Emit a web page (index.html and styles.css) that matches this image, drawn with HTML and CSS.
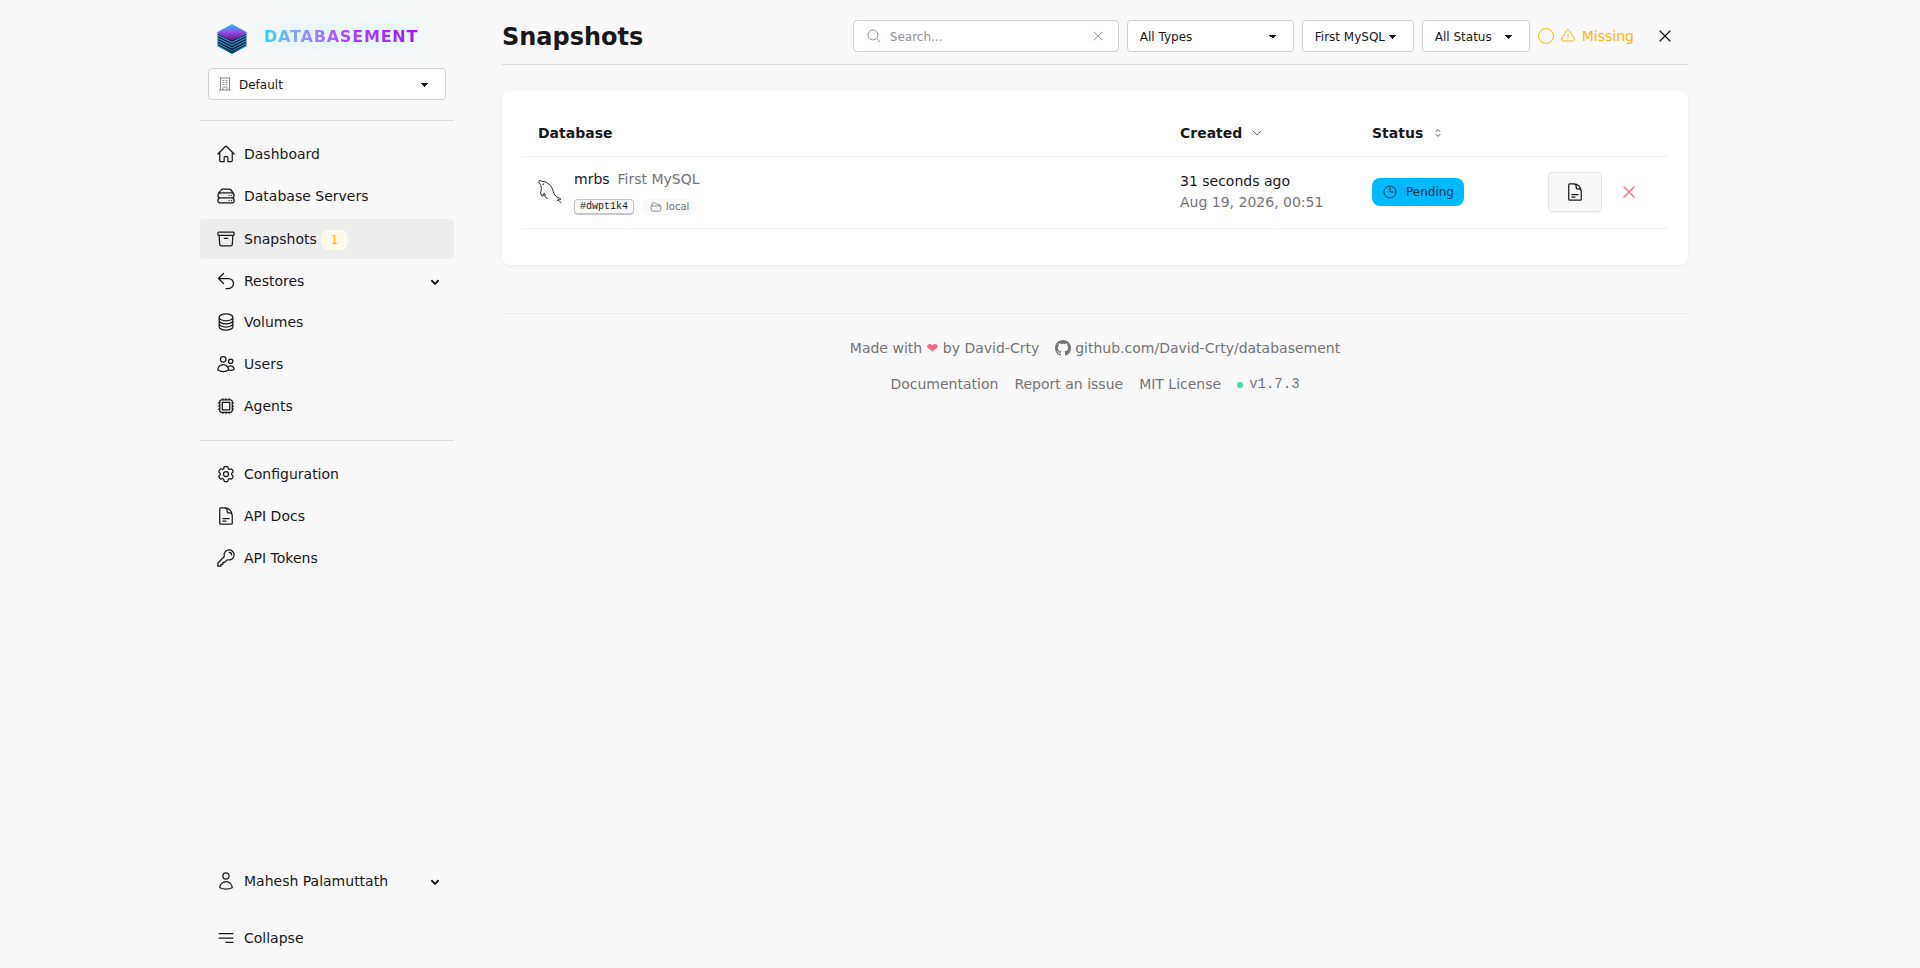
FILE: index.html
```html
<!DOCTYPE html>
<html lang="en">
<head>
<meta charset="utf-8">
<meta name="viewport" content="width=device-width, initial-scale=1">
<title>Snapshots - Databasement</title>
<link rel="stylesheet" href="styles.css">
</head>
<body>
<svg class="sprite" aria-hidden="true">
  <symbol id="i-doc" viewBox="0 0 24 24"><path d="M19.5 14.25v-2.625a3.375 3.375 0 0 0-3.375-3.375h-1.5A1.125 1.125 0 0 1 13.5 7.125v-1.5a3.375 3.375 0 0 0-3.375-3.375H8.25m0 12.75h7.5m-7.5 3H12M10.5 2.25H5.625c-.621 0-1.125.504-1.125 1.125v17.25c0 .621.504 1.125 1.125 1.125h12.75c.621 0 1.125-.504 1.125-1.125V11.25a9 9 0 0 0-9-9Z"/></symbol>
  <symbol id="i-x" viewBox="0 0 24 24"><path d="M6 18 18 6M6 6l12 12"/></symbol>
</svg>
<div class="layout">
  <aside class="sidebar">
    <a class="brand" href="#">
      <svg class="brand-mark" viewBox="0 0 86 88" aria-hidden="true">
        <defs>
          <linearGradient id="top" x1="0" y1="0" x2="0" y2="1"><stop offset="0" stop-color="#22c3f7"/><stop offset=".45" stop-color="#9450ea"/><stop offset=".75" stop-color="#7a2fb8"/><stop offset="1" stop-color="#4a1570"/></linearGradient>
          <linearGradient id="edge" gradientUnits="userSpaceOnUse" x1="0" y1="30" x2="0" y2="88"><stop offset="0" stop-color="#3fb4ff"/><stop offset=".55" stop-color="#25a3c4"/><stop offset="1" stop-color="#125a78"/></linearGradient>
        </defs>
        <path d="M1 28 43 48 85 28V64L43 87 1 64Z" fill="#0d1440"/>
        <g fill="none" stroke="url(#edge)" stroke-width="3">
          <path d="M1 33 43 54 85 33"/><path d="M1 41 43 62 85 41"/><path d="M1 49 43 70 85 49"/><path d="M1 57 43 78 85 57"/><path d="M1 64 43 86 85 64"/>
        </g>
        <path d="M43 1 85 24V28L43 49 1 28V24Z" fill="url(#top)"/>
        <path d="M1 29V24L43 2 85 24V29" fill="none" stroke="#20b4ee" stroke-width="2"/>
      </svg>
      <span class="brand-name">DATABASEMENT</span>
    </a>
    <div class="org">
      <svg class="icon org-icon" viewBox="0 0 24 24" aria-hidden="true"><path d="M3.75 21h16.5M4.5 3h15M5.25 3v18m13.5-18v18M9 6.75h1.5m-1.5 3h1.5m-1.5 3h1.5m3-6H15m-1.5 3H15m-1.5 3H15M9 21v-3.375c0-.621.504-1.125 1.125-1.125h3.75c.621 0 1.125.504 1.125 1.125V21"/></svg>
      <select class="select org-select" aria-label="Organization"><option>Default</option></select>
    </div>
    <nav class="menu" aria-label="Main">
      <a class="item" href="#"><svg class="icon" viewBox="0 0 24 24"><path d="m2.25 12 8.954-8.955c.44-.439 1.152-.439 1.591 0L21.75 12M4.5 9.75v10.125c0 .621.504 1.125 1.125 1.125H9.75v-4.875c0-.621.504-1.125 1.125-1.125h2.25c.621 0 1.125.504 1.125 1.125V21h4.125c.621 0 1.125-.504 1.125-1.125V9.75"/></svg>Dashboard</a>
      <a class="item" href="#"><svg class="icon" viewBox="0 0 24 24"><path d="M5.25 14.25h13.5m-13.5 0a3 3 0 0 1-3-3m3 3a3 3 0 1 0 0 6h13.5a3 3 0 1 0 0-6m-16.5-3a3 3 0 0 1 3-3h13.5a3 3 0 0 1 3 3m-19.5 0a4.5 4.5 0 0 1 .9-2.7L5.737 5.1a3.375 3.375 0 0 1 2.7-1.35h7.126c1.062 0 2.062.5 2.7 1.35l2.587 3.45a4.5 4.5 0 0 1 .9 2.7m0 0a3 3 0 0 1-3 3m0 3h.008v.008h-.008v-.008Zm0-6h.008v.008h-.008v-.008Zm-3 6h.008v.008h-.008v-.008Zm0-6h.008v.008h-.008v-.008Z"/></svg>Database Servers</a>
      <a class="item item-active" href="#" aria-current="page"><svg class="icon" viewBox="0 0 24 24"><path d="m20.25 7.5-.625 10.632a2.25 2.25 0 0 1-2.247 2.118H6.622a2.25 2.25 0 0 1-2.247-2.118L3.75 7.5M10 11.25h4M3.375 7.5h17.25c.621 0 1.125-.504 1.125-1.125v-1.5c0-.621-.504-1.125-1.125-1.125H3.375c-.621 0-1.125.504-1.125 1.125v1.5c0 .621.504 1.125 1.125 1.125Z"/></svg><span class="with-count">Snapshots <span class="count">1</span></span></a>
      <button class="item item-group" type="button" aria-expanded="false"><svg class="icon" viewBox="0 0 24 24"><path d="M9 15 3 9m0 0 6-6M3 9h12a6 6 0 0 1 0 12h-3"/></svg>Restores</button>
      <a class="item" href="#"><svg class="icon" viewBox="0 0 24 24"><path d="M20.25 6.375c0 2.278-3.694 4.125-8.25 4.125S3.75 8.653 3.75 6.375m16.5 0c0-2.278-3.694-4.125-8.25-4.125S3.75 4.097 3.75 6.375m16.5 0v11.25c0 2.278-3.694 4.125-8.25 4.125s-8.25-1.847-8.25-4.125V6.375m16.5 0v3.75m-16.5-3.75v3.75m16.5 0v3.75C20.25 16.153 16.556 18 12 18s-8.25-1.847-8.25-4.125v-3.75m16.5 0c0 2.278-3.694 4.125-8.25 4.125s-8.25-1.847-8.25-4.125"/></svg>Volumes</a>
      <a class="item" href="#"><svg class="icon" viewBox="0 0 24 24"><path d="M15 19.128a9.38 9.38 0 0 0 2.625.372 9.337 9.337 0 0 0 4.121-.952 4.125 4.125 0 0 0-7.533-2.493M15 19.128v-.003c0-1.113-.285-2.16-.786-3.07M15 19.128v.106A12.318 12.318 0 0 1 8.624 21c-2.331 0-4.512-.645-6.374-1.766l-.001-.109a6.375 6.375 0 0 1 11.964-3.07M12 6.375a3.375 3.375 0 1 1-6.75 0 3.375 3.375 0 0 1 6.75 0Zm8.25 2.25a2.625 2.625 0 1 1-5.25 0 2.625 2.625 0 0 1 5.25 0Z"/></svg>Users</a>
      <a class="item" href="#"><svg class="icon" viewBox="0 0 24 24"><path d="M8.25 3v1.5M4.5 8.25H3m18 0h-1.5M4.5 12H3m18 0h-1.5m-15 3.75H3m18 0h-1.5M8.25 19.5V21M12 3v1.5m0 15V21m3.75-18v1.5m0 15V21m-9-1.5h10.5a2.25 2.25 0 0 0 2.25-2.25V6.75a2.25 2.25 0 0 0-2.25-2.25H6.75A2.25 2.25 0 0 0 4.5 6.75v10.5a2.25 2.25 0 0 0 2.25 2.25Zm.75-12h9v9h-9v-9Z"/></svg>Agents</a>
    </nav>
    <nav class="menu" aria-label="Settings">
      <a class="item" href="#"><svg class="icon" viewBox="0 0 24 24"><path d="M9.594 3.94c.09-.542.56-.94 1.11-.94h2.593c.55 0 1.02.398 1.11.94l.213 1.281c.063.374.313.686.645.87.074.04.147.083.22.127.325.196.72.257 1.075.124l1.217-.456a1.125 1.125 0 0 1 1.37.49l1.296 2.247a1.125 1.125 0 0 1-.26 1.431l-1.003.827c-.293.241-.438.613-.43.992a7.723 7.723 0 0 1 0 .255c-.008.378.137.75.43.991l1.004.827c.424.35.534.955.26 1.43l-1.298 2.247a1.125 1.125 0 0 1-1.369.491l-1.217-.456c-.355-.133-.75-.072-1.076.124a6.47 6.47 0 0 1-.22.128c-.331.183-.581.495-.644.869l-.213 1.281c-.09.543-.56.94-1.11.94h-2.594c-.55 0-1.019-.398-1.11-.94l-.213-1.281c-.062-.374-.312-.686-.644-.87a6.52 6.52 0 0 1-.22-.127c-.325-.196-.72-.257-1.076-.124l-1.217.456a1.125 1.125 0 0 1-1.369-.49l-1.297-2.247a1.125 1.125 0 0 1 .26-1.431l1.004-.827c.292-.24.437-.613.43-.991a6.932 6.932 0 0 1 0-.255c.007-.38-.138-.751-.43-.992l-1.004-.827a1.125 1.125 0 0 1-.26-1.43l1.297-2.247a1.125 1.125 0 0 1 1.37-.491l1.216.456c.356.133.751.072 1.076-.124.072-.044.146-.086.22-.128.332-.183.582-.495.644-.869l.214-1.28Z"/><path d="M15 12a3 3 0 1 1-6 0 3 3 0 0 1 6 0Z"/></svg>Configuration</a>
      <a class="item" href="#"><svg class="icon"><use href="#i-doc"/></svg>API Docs</a>
      <a class="item" href="#"><svg class="icon" viewBox="0 0 24 24"><path d="M15.75 5.25a3 3 0 0 1 3 3m3 0a6 6 0 0 1-7.029 5.912c-.563-.097-1.159.026-1.563.43L10.5 17.25H8.25v2.25H6v2.25H2.25v-2.818c0-.597.237-1.17.659-1.591l6.499-6.499c.404-.404.527-1 .43-1.563A6 6 0 1 1 21.75 8.25Z"/></svg>API Tokens</a>
    </nav>
    <div class="account">
      <button class="item item-group" type="button" aria-expanded="false"><svg class="icon" viewBox="0 0 24 24"><path d="M15.75 6a3.75 3.75 0 1 1-7.5 0 3.75 3.75 0 0 1 7.5 0ZM4.501 20.118a7.5 7.5 0 0 1 14.998 0A17.933 17.933 0 0 1 12 21.75c-2.676 0-5.216-.584-7.499-1.632Z"/></svg>Mahesh Palamuttath</button>
      <button class="item" type="button"><svg class="icon" viewBox="0 0 24 24"><path d="M3.75 6.75h16.5M3.75 12h16.5M12 17.25h8.25"/></svg>Collapse</button>
    </div>
  </aside>

  <main class="main">
    <header class="page-head">
      <h1 class="title">Snapshots</h1>
      <div class="filters">
        <label class="search">
          <svg class="icon icon-sm" viewBox="0 0 24 24" aria-hidden="true"><path d="m21 21-5.197-5.197m0 0A7.5 7.5 0 1 0 5.196 5.196a7.5 7.5 0 0 0 10.607 10.607Z"/></svg>
          <input class="search-input" type="text" placeholder="Search..." aria-label="Search">
          <button class="search-clear" type="button" aria-label="Clear search"><svg class="icon icon-sm"><use href="#i-x"/></svg></button>
        </label>
        <select class="select select-type" aria-label="Type"><option>All Types</option></select>
        <select class="select select-server" aria-label="Server"><option>First MySQL</option></select>
        <select class="select select-status" aria-label="Status"><option>All Status</option></select>
        <label class="missing">
          <input class="check" type="checkbox">
          <svg class="icon icon-sm" viewBox="0 0 24 24" aria-hidden="true"><path d="M12 9v3.75m-9.303 3.376c-.866 1.5.217 3.374 1.948 3.374h14.71c1.73 0 2.813-1.874 1.948-3.374L13.949 3.378c-.866-1.5-3.032-1.5-3.898 0L2.697 16.126ZM12 15.75h.007v.008H12v-.008Z"/></svg>
          <span>Missing</span>
        </label>
        <button class="reset" type="button" aria-label="Reset filters"><svg class="icon"><use href="#i-x"/></svg></button>
      </div>
    </header>

    <section class="card">
      <table class="table">
        <colgroup><col><col class="col-created"><col class="col-status"><col class="col-actions"></colgroup>
        <thead>
          <tr>
            <th>Database</th>
            <th><span class="sort">Created <svg class="icon icon-xs" viewBox="0 0 24 24" aria-hidden="true"><path d="m19.5 8.25-7.5 7.5-7.5-7.5"/></svg></span></th>
            <th><span class="sort">Status <svg class="icon icon-xs sort-idle" viewBox="0 0 24 24" aria-hidden="true"><path d="M8.25 15 12 18.75 15.75 15m-7.5-6L12 5.25 15.75 9"/></svg></span></th>
            <td></td>
          </tr>
        </thead>
        <tbody>
          <tr>
            <td>
              <div class="db">
                <svg class="db-icon" viewBox="0 0 24 24" aria-hidden="true"><path d="M.8 1.2C1.6.2 2.8.5 3.8 1.3 7 1 10.5 3.2 12.6 5.8c1.8 2.2 2.3 5 3.5 7.8.8 1.9 2 3.1 3.8 3.9 1.2.5 2.3.9 3 1.7-.9-.1-2 0-2.8.5.6 1.3 2 2 3.3 3.2M.8 1.2C.2 2.3 2.3 3.7 2.9 5.7c.6 1.9.2 3.7.3 5-.7 1.3-.5 3 .2 4.6.3.8 1 1.3 1.4.7.3-.7.3-1.5.6-2.2.6 1.9 1.8 3.4 4.3 4.7M6.2 12.8c.3 1.100.7 1.900 1.300 2.700M21 20.300c-.9.200-1.400.200-2-.300"/><circle cx="5.2" cy="4.2" r=".4"/></svg>
                <div class="db-info">
                  <div class="db-name">mrbs <span class="muted">First MySQL</span></div>
                  <div class="db-tags">
                    <kbd class="kbd">#dwpt1k4</kbd>
                    <span class="volume"><svg class="icon icon-xs" viewBox="0 0 24 24" aria-hidden="true"><path d="M3.75 9.776c.112-.017.227-.026.344-.026h15.812c.117 0 .232.009.344.026m-16.5 0a2.25 2.25 0 0 0-1.883 2.542l.857 6a2.25 2.25 0 0 0 2.227 1.932H19.05a2.25 2.25 0 0 0 2.227-1.932l.857-6a2.25 2.25 0 0 0-1.883-2.542m-16.5 0V6A2.25 2.25 0 0 1 6 3.75h3.879a1.5 1.5 0 0 1 1.06.44l2.122 2.12a1.5 1.5 0 0 0 1.06.44H18A2.25 2.25 0 0 1 20.25 9v.776"/></svg>local</span>
                  </div>
                </div>
              </div>
            </td>
            <td><div>31 seconds ago</div><div class="muted">Aug 19, 2026, 00:51</div></td>
            <td><span class="status"><svg class="icon icon-sm" viewBox="0 0 24 24" aria-hidden="true"><path d="M12 6v6h4.5m4.5 0a9 9 0 1 1-18 0 9 9 0 0 1 18 0Z"/></svg>Pending</span></td>
            <td class="cell-actions">
              <div class="actions">
                <button class="btn-logs" type="button" aria-label="View logs"><svg class="icon"><use href="#i-doc"/></svg></button>
                <button class="btn-delete" type="button" aria-label="Delete"><svg class="icon"><use href="#i-x"/></svg></button>
              </div>
            </td>
          </tr>
        </tbody>
      </table>
    </section>

    <footer class="footer">
      <div class="foot-row">
        <span>Made with <span class="heart">❤</span> by <a href="#">David-Crty</a></span>
        <a class="github" href="#"><svg class="github-mark" viewBox="0 0 16 16" aria-hidden="true"><path d="M8 0C3.58 0 0 3.58 0 8c0 3.54 2.29 6.53 5.47 7.59.4.07.55-.17.55-.38 0-.19-.01-.82-.01-1.49-2.01.37-2.53-.49-2.69-.94-.09-.23-.48-.94-.82-1.13-.28-.15-.68-.52-.01-.53.63-.01 1.08.58 1.23.82.72 1.21 1.87.87 2.33.66.07-.52.28-.87.51-1.07-1.78-.2-3.64-.89-3.64-3.95 0-.87.31-1.59.82-2.15-.08-.2-.36-1.02.08-2.12 0 0 .67-.21 2.2.82.64-.18 1.32-.27 2-.27s1.36.09 2 .27c1.53-1.04 2.2-.82 2.2-.82.44 1.1.16 1.92.08 2.12.51.56.82 1.27.82 2.15 0 3.07-1.87 3.75-3.65 3.95.29.25.54.73.54 1.48 0 1.07-.01 1.93-.01 2.2 0 .21.15.46.55.38A8.01 8.01 0 0 0 16 8c0-4.42-3.58-8-8-8Z"/></svg>github.com/David-Crty/databasement</a>
      </div>
      <div class="foot-row">
        <a href="#">Documentation</a>
        <a href="#">Report an issue</a>
        <a href="#">MIT License</a>
        <a class="version" href="#"><span class="dot"></span>v1.7.3</a>
      </div>
    </footer>
  </main>
</div>
</body>
</html>
```

FILE: styles.css
```css
:root {
  --base-200: #f8f8f8;
  --base-300: #ededed;
  --line: #dedede;
  --border: #cfcfcf;
  --text: #18181b;
  --muted: #747475;
  --warning: #fcb700;
  --error: #ff637d;
}

* { box-sizing: border-box; }

body {
  margin: 0;
  background: var(--base-200);
  color: var(--text);
  font: 14px/20px "DejaVu Sans", sans-serif;
}

a { color: inherit; text-decoration: none; }

button {
  margin: 0;
  padding: 0;
  border: 0;
  background: none;
  color: inherit;
  font: inherit;
  cursor: pointer;
}

.sprite { position: absolute; width: 0; height: 0; }

.icon {
  display: block;
  flex: none;
  width: 20px;
  height: 20px;
  fill: none;
  stroke: currentColor;
  stroke-width: 1.5;
  stroke-linecap: round;
  stroke-linejoin: round;
}
.icon-sm { width: 16px; height: 16px; }
.icon-xs { width: 12px; height: 12px; }

.layout {
  display: flex;
  max-width: 1536px;
  min-height: 100vh;
  margin: 0 auto;
}

/* Sidebar */
.sidebar {
  display: flex;
  flex-direction: column;
  flex: none;
  width: 270px;
  padding: 24px 8px 11px;
}

.brand {
  display: flex;
  align-items: center;
  gap: 17px;
  height: 30px;
  padding-left: 17px;
}
.brand-mark { width: 30px; height: 30px; }
.brand-name {
  margin-bottom: 4px;
  background: linear-gradient(90deg in oklab, #00d3f2, #ad46ff 50%, #9810fa);
  background-clip: text;
  -webkit-background-clip: text;
  color: transparent;
  font-size: 16px;
  font-weight: 700;
  letter-spacing: 0.05em;
  filter: drop-shadow(0 0 10px rgba(0, 211, 242, 0.3));
}

.select {
  appearance: none;
  height: 32px;
  padding: 1px 28px 0 12px;
  border: 1px solid var(--border);
  border-radius: 4px;
  background-color: #fff;
  background-image:
    linear-gradient(45deg, transparent 50%, currentColor 50%),
    linear-gradient(135deg, currentColor 50%, transparent 50%);
  background-position: calc(100% - 20px) calc(50% + 1px), calc(100% - 16px) calc(50% + 1px);
  background-size: 4px 4px, 4px 4px;
  background-repeat: no-repeat;
  color: var(--text);
  font: 12px/18px "DejaVu Sans", sans-serif;
}

.org {
  display: grid;
  align-items: center;
  margin: 14px 8px 0;
}
.org > * { grid-area: 1 / 1; }
.org-icon {
  z-index: 1;
  width: 16px;
  height: 16px;
  margin-left: 9px;
  color: #8b8b8c;
}
.org-select { width: 100%; padding-left: 30px; }

.menu {
  display: flex;
  flex-direction: column;
  gap: 4px;
  margin-top: 20px;
  padding-top: 14px;
  border-top: 1px solid var(--line);
}
.menu + .menu { margin-top: 15px; }

.item {
  display: flex;
  align-items: center;
  gap: 8px;
  min-height: 38px;
  padding: 0 16px;
  border-radius: 4px;
  text-align: left;
}
.item-active { min-height: 40px; background: var(--base-300); }
.item-group { min-height: 36px; }
.item-group::after {
  content: "";
  width: 6px;
  height: 6px;
  margin-left: auto;
  box-shadow: inset 2px 2px;
  transform: rotate(-135deg);
}

.with-count { display: flex; align-items: center; gap: 4px; }
.count {
  height: 20px;
  margin-top: 2px;
  padding: 0 10px;
  border-radius: 8px;
  background: #fff9ea;
  color: var(--warning);
  font-size: 12px;
}

.account {
  display: flex;
  flex-direction: column;
  gap: 20px;
  margin-top: auto;
}

/* Page header */
.main { flex: 1; min-width: 0; padding: 0 40px; }

.page-head {
  display: flex;
  align-items: center;
  justify-content: space-between;
  padding: 16px 0 8px;
  border-bottom: 1px solid var(--line);
}
.title { margin: 0; padding-top: 2px; font-size: 24px; line-height: 32px; font-weight: 700; }

.filters { display: flex; align-items: center; gap: 8px; }

.search {
  display: flex;
  align-items: center;
  gap: 8px;
  width: 266px;
  height: 32px;
  padding: 0 12px;
  border: 1px solid var(--border);
  border-radius: 4px;
  background: #fff;
  color: #949495;
}
.search-input {
  flex: 1;
  min-width: 0;
  padding: 1px 0 0;
  border: 0;
  outline: 0;
  background: none;
  color: var(--text);
  font: 12px/18px "DejaVu Sans", sans-serif;
}
.search-input::placeholder { color: #949495; opacity: 1; }

.select-type { width: 167px; }
.select-server { width: 112px; }
.select-status { width: 108px; }

.missing { display: flex; align-items: center; gap: 6px; color: var(--warning); }
.check {
  appearance: none;
  width: 16px;
  height: 16px;
  margin: 0;
  border: 1px solid var(--warning);
  border-radius: 50%;
}

.reset { display: grid; place-items: center; width: 46px; height: 40px; }

/* Snapshot table */
.card {
  margin-top: 26px;
  padding: 20px 20px 36px;
  border-radius: 8px;
  background: #fff;
  box-shadow: 0 1px 3px rgba(0, 0, 0, 0.06);
}

.table { width: 100%; border-collapse: collapse; table-layout: fixed; }
.col-created { width: 192px; }
.col-status { width: 176px; }
.col-actions { width: 136px; }
.table th, .table td { padding: 0 16px; text-align: left; }
.table tr { height: 72px; border-bottom: 1px solid #f1f1f1; }
.table thead tr { height: 45px; }

.sort { display: inline-flex; align-items: center; gap: 9px; }
.sort-idle { color: #4a4a4c; stroke-width: 2; }

.muted { color: var(--muted); }
.table tbody td { line-height: 21px; }

.db { display: flex; align-items: center; gap: 12px; }
.db-icon {
  width: 24px;
  height: 24px;
  fill: none;
  stroke: #222;
  stroke-width: 1;
  stroke-linejoin: round;
}
.db-name { display: flex; gap: 8px; }
.db-tags { display: flex; align-items: center; gap: 8px; margin-top: 9px; }
.kbd {
  height: 16px;
  padding: 0 5px;
  border: 1px solid #c6c6c6;
  border-bottom-width: 2px;
  border-radius: 4px;
  background: var(--base-200);
  font: 10px/13px "Liberation Mono", monospace;
}
.volume {
  display: flex;
  align-items: center;
  gap: 4px;
  height: 16px;
  padding: 0 8px;
  border-radius: 8px;
  background: var(--base-200);
  color: var(--muted);
  font-size: 10px;
  line-height: 16px;
}

.status {
  display: inline-flex;
  align-items: center;
  gap: 8px;
  height: 28px;
  padding: 0 10px;
  border-radius: 8px;
  background: #00bafe;
  color: #042e49;
  font-size: 12px;
  vertical-align: middle;
}

.table .cell-actions { padding-right: 12px; }
.actions { display: flex; align-items: center; }
.btn-logs, .btn-delete { display: grid; flex: none; place-items: center; height: 40px; }
.btn-logs {
  width: 54px;
  border: 1px solid #e5e5e5;
  border-radius: 4px;
  background: var(--base-200);
  box-shadow: 0 2px 3px -2px rgba(0, 0, 0, 0.12);
}
.btn-delete { width: 54px; color: var(--error); }

/* Footer */
.footer {
  display: grid;
  gap: 16px;
  margin-top: 48px;
  padding: 24px 0;
  border-top: 1px solid #ebebeb;
  color: var(--muted);
}
.foot-row { display: flex; justify-content: center; gap: 16px; }
.heart { color: var(--error); }
.github { display: flex; align-items: center; gap: 4px; }
.github-mark { width: 16px; height: 16px; fill: currentColor; }
.version {
  display: flex;
  align-items: center;
  gap: 6px;
  font-family: "Liberation Mono", monospace;
}
.dot { width: 6px; height: 6px; margin-top: 2px; border-radius: 50%; background: #3fdda9; }
```
